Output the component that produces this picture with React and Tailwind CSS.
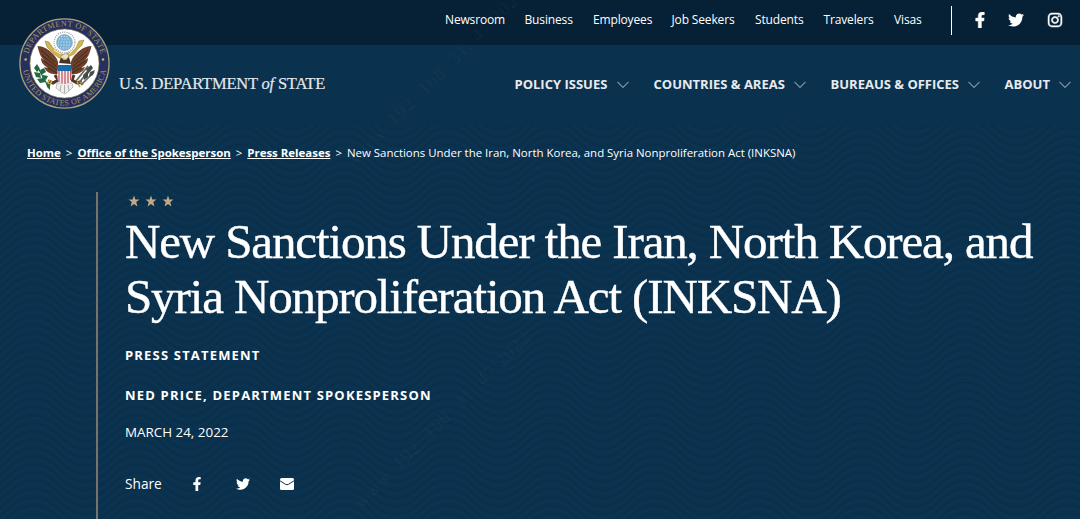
import { FaFacebookF, FaTwitter, FaInstagram } from "react-icons/fa";

const TOP_LINKS = [
    { label: "Newsroom", width: "w-[59.5px]" },
    { label: "Business", width: "w-[48.5px]" },
    { label: "Employees", width: "w-[58.5px]" },
    { label: "Job Seekers", width: "w-[63.5px]" },
    { label: "Students", width: "w-[48.5px]" },
    { label: "Travelers", width: "w-[50.5px]" },
    { label: "Visas", width: "w-[28.5px]" },
];

const MAIN_LINKS = [
    { label: "POLICY ISSUES", width: "w-[93px]" },
    { label: "COUNTRIES & AREAS", width: "w-[131px]" },
    { label: "BUREAUS & OFFICES", width: "w-[128px]" },
    { label: "ABOUT", width: "w-[45px]" },
];

const WAVE_ROWS = [-3, -2, -1, 0, 1, 2, 3, 4, 5, 6];
const WAVE_PATH = "M-25.875 12 Q0 -14 25.875 12 T77.625 12 T129.375 12";

function WaveBackground() {
    return (
        <svg className="absolute inset-0 h-full w-full" aria-hidden="true">
            <defs>
                <pattern id="waves" width="103.5" height="41" patternUnits="userSpaceOnUse" x="33.5" y="4">
                    {WAVE_ROWS.map(row => (
                        <g key={row} transform={`translate(0 ${row * 8.2})`} fill="none">
                            <path d={WAVE_PATH} stroke="#072c47" strokeWidth="1.5" opacity="0.5" />
                            <path d={WAVE_PATH} transform="translate(0 3.5)" stroke="#11395a" strokeWidth="1.5" opacity="0.3" />
                        </g>
                    ))}
                </pattern>
            </defs>
            <rect width="100%" height="100%" fill="url(#waves)" />
        </svg>
    );
}

function Seal() {
    return (
        <svg className="h-[91px] w-[91px] shrink-0" viewBox="0 0 91 91" aria-label="Department of State seal">
            <defs>
                <path id="sealTop" d="M8.2 45.5 A37.3 37.3 0 0 1 82.8 45.5" />
                <path id="sealBottom" d="M3.6 45.5 A41.9 41.9 0 0 0 87.4 45.5" />
            </defs>
            <circle cx="45.5" cy="45.5" r="44.6" fill="#272f5f" stroke="#a8a27b" strokeWidth="1.2" />
            <circle cx="45.5" cy="45.5" r="34.6" fill="#fff" stroke="#77724f" strokeWidth="0.7" />
            <g fill="#a49a5c" fontFamily="Liberation Serif, serif" fontSize="8">
                <text>
                    <textPath href="#sealTop" startOffset="50%" textAnchor="middle" textLength="98">DEPARTMENT OF STATE</textPath>
                </text>
                <text>
                    <textPath href="#sealBottom" startOffset="50%" textAnchor="middle" textLength="118">UNITED STATES OF AMERICA</textPath>
                </text>
            </g>
            <circle cx="6.7" cy="41.5" r="1.3" fill="#c9b45c" />
            <circle cx="84" cy="41.5" r="1.3" fill="#c9b45c" />

            {/* glory and stars */}
            <circle cx="45.5" cy="24.5" r="10.4" fill="#fff" stroke="#a8aaad" strokeWidth="1.3" strokeDasharray="1.2 1" />
            <circle cx="45.5" cy="24.5" r="8" fill="#79b3d8" stroke="#8ea5b2" strokeWidth="0.6" />
            <g stroke="#cfe8f5" strokeWidth="1.1" strokeDasharray="1.1 1.6">
                <path d="M40 21 H51 M39 24 H52 M39 27 H52 M41 30 H50 M42 18.5 H49" />
            </g>

            {/* scroll */}
            <path d="M26 23 L30 24 L34 30 L39 34 L45 37 L52 34 L57 30 L60 23 L65 22 L63 27 L59 31 L55 36 L49 39 L40 40 L34 35 L28 29 Z" fill="#d4b54d" stroke="#8d7430" strokeWidth="0.5" />
            <path d="M35 32 L42 36 M55 31 L50 36" stroke="#fff3bd" strokeWidth="1" />

            {/* wings */}
            <path d="M18.500 28 C24 28 29 31 33 35 C36 38 38 40 39 44 L39 56 C32 57 27 54 25 49 L29 50 C24 47 22 44 22 40 L25 42 C21 38 20 34 18.500 28 Z" fill="#6c402b" />
            <path d="M72.500 28 C67 28 62 31 58 35 C55 38 53 40 52 44 L52 56 C59 57 64 54 66 49 L62 50 C67 47 69 44 69 40 L66 42 C70 38 71 34 72.500 28 Z" fill="#6c402b" />
            <g fill="none" stroke="#352519" strokeWidth="0.8">
                <path d="M22 32 L36 44 M23 37 L37 48 M25 43 L38 52 M29 50 L38 55" />
                <path d="M69 32 L55 44 M68 37 L54 48 M66 43 L53 52 M62 50 L53 55" />
            </g>
            <path d="M40 45 L42 39 L45 42 L50 39 L52 46 Z" fill="#4d3525" />
            <path d="M42 38 L47 35 L50 38 L47 42 L44 40 L41 40 Z" fill="#e9e1cd" stroke="#8d7430" strokeWidth="0.5" />

            {/* tail and legs */}
            <path d="M38 65 L53 65 L54 69 L50 73 L46 76 L42 74 L37 70 Z" fill="#eeeeed" stroke="#9b9b9b" strokeWidth="0.6" />
            <path d="M42 67 L41 73 M45.500 67 V75 M49 67 L50 73" stroke="#909090" strokeWidth="0.7" />
            <path d="M36 57 L39 62 L34 65 L29 63 M55 57 L53 62 L58 65 L63 64" fill="none" stroke="#4d3525" strokeWidth="3" />
            <path d="M31 62 L28 66 M33 63 L30 68 M60 62 L64 67 M58 64 L61 69" stroke="#d0a53a" strokeWidth="1.600" />

            {/* shield */}
            <path d="M38.500 51 H52.500 V61 Q52 65 45.500 66 Q39 65 38.500 61 Z" fill="#f7eeee" />
            <path d="M40 52 V64 M43 52 V65.500 M46 52 V66 M49 52 V65 M51.700 52 V62" stroke="#bd3b4c" strokeWidth="1.100" />
            <rect x="38.500" y="47" width="14" height="6" fill="#176aa5" />

            {/* olive branch and arrows */}
            <path d="M18 48 L29 68" stroke="#1c6038" strokeWidth="1.200" />
            <g fill="#236a40">
                <path d="M18 46 L21 51 L18 54 L15 50 Z M15 54 L21 55 L22 60 L17 59 Z M21 52 L25 50 L27 54 L22 57 Z M18 61 L24 60 L27 64 L21 65 Z M24 57 L29 58 L27 62 L23 60 Z M27 65 L31 66 L31 72 L28 69 Z" />
            </g>
            <path d="M59 66 L72 50 M62 67 L75 54 M57 63 L69 48" stroke="#656660" strokeWidth="1.700" />
            <path d="M67 51 L72 47 L74 50 L69 56 Z M71 54 L76 52 L74 57 L70 59 Z M64 57 L69 52 L69 59 L65 62 Z" fill="#464a48" />
        </svg>
    );
}

function Chevron() {
    return (
        <svg className="ml-[9px] h-2 w-3 shrink-0" viewBox="0 0 12 8" fill="none" aria-hidden="true">
            <path d="M0.500 0.800 L6 6.500 L11.500 0.800" stroke="#8495a7" strokeWidth="1.100" />
        </svg>
    );
}

function Star() {
    return (
        <svg className="h-3 w-3" viewBox="0 0 24 24" fill="#c4a884" aria-hidden="true">
            <path d="M12 1 L14.800 9 H23 L16.500 14.200 L18.800 23 L12 17.800 L5.200 23 L7.500 14.200 L1 9 H9.200 Z" />
        </svg>
    );
}

function MailIcon() {
    return (
        <svg className="ml-[30px] h-3 w-[14px]" viewBox="0 0 14 12" fill="none" aria-hidden="true">
            <rect width="14" height="12" rx="1.500" fill="#fff" />
            <path d="M0 2.800 L5.500 6.300 Q7 7.200 8.500 6.300 L14 2.800" stroke="#0b304c" strokeWidth="1" />
        </svg>
    );
}

function Watermark() {
    return (
        <div className="pointer-events-none absolute inset-0 overflow-hidden font-['Liberation_Serif',serif] text-[19px] leading-6 tracking-[1px] whitespace-nowrap text-white/[0.04]" aria-hidden="true">
            <span className="absolute top-[149px] left-[352px] origin-left -rotate-45">www. 192. 168. 31. 47 2022</span>
            <span className="absolute top-[493px] left-[357px] origin-left -rotate-45">www. 192. 168. 31. 47 2022</span>
        </div>
    );
}

export default function App() {
    return (
        <div className="relative flex h-[519px] w-[1080px] flex-col overflow-hidden bg-[#0a314d] font-['Open_Sans',sans-serif] text-white">
            <header className="relative h-[125px] shrink-0">
                <div className="flex h-[45px] items-center bg-[#062136] pb-[5px] pl-[445px] text-xs">
                    <nav className="flex gap-5 tracking-[-0.15px] whitespace-nowrap">
                        {TOP_LINKS.map(item => (
                            <a key={item.label} className={item.width}>{item.label}</a>
                        ))}
                    </nav>
                    <div className="ml-[28.5px] h-[29px] w-px bg-white" />
                    <FaFacebookF className="ml-[20px] h-4 w-4" stroke="currentColor" strokeWidth="16" />
                    <FaTwitter className="ml-[20px] h-4 w-4" />
                    <FaInstagram className="ml-[23px] h-4 w-4" stroke="currentColor" strokeWidth="16" />
                </div>
                <nav className="flex h-20 items-center pl-[514.5px] text-[13px] font-bold whitespace-nowrap text-[#e7ebee]">
                    {MAIN_LINKS.map(item => (
                        <a key={item.label} className="mr-[25px] flex shrink-0 items-center">
                            <span className={item.width}>{item.label}</span>
                            <Chevron />
                        </a>
                    ))}
                </nav>
                <div className="absolute top-[17.5px] left-[19px] flex">
                    <Seal />
                    <div className="mt-[54px] ml-[9px] font-['Liberation_Serif',serif] text-[16.5px] leading-6 tracking-[-0.2px] whitespace-nowrap text-[#e2e8ec] [-webkit-text-stroke:0.2px]">
                        U.S. DEPARTMENT <i>of</i> STATE
                    </div>
                </div>
            </header>

            <main className="relative flex-1">
                <WaveBackground />
                <div className="relative flex h-full flex-col">
                    <div className="mt-5 ml-[27px] flex gap-[5px] text-[11.45px] leading-4 whitespace-nowrap">
                        <a className="font-bold underline">Home</a>
                        <span>&gt;</span>
                        <a className="font-bold underline">Office of the Spokesperson</a>
                        <span>&gt;</span>
                        <a className="font-bold underline">Press Releases</a>
                        <span>&gt;</span>
                        <span>New Sanctions Under the Iran, North Korea, and Syria Nonproliferation Act (INKSNA)</span>
                    </div>

                    <div className="mt-[31px] ml-24 flex-1 border-l-2 border-[#77736b] pl-[27px]">
                        <div className="flex gap-[5px] pt-[3px] pl-[2.5px]">
                            <Star />
                            <Star />
                            <Star />
                        </div>
                        <h1 className="mt-[7px] font-['Liberation_Serif',serif] text-[49px] leading-[55px] tracking-[-1.13px] whitespace-nowrap [-webkit-text-stroke:0.4px]">
                            <span className="block">New Sanctions Under the Iran, North Korea, and</span>
                            <span className="block">Syria Nonproliferation Act (INKSNA)</span>
                        </h1>
                        <p className="mt-[21px] text-[13px] leading-5 font-bold tracking-[1.18px]">PRESS STATEMENT</p>
                        <p className="mt-5 text-[13px] leading-5 font-bold tracking-[1.18px]">NED PRICE, DEPARTMENT SPOKESPERSON</p>
                        <p className="mt-[17px] text-[13.4px] leading-5">MARCH 24, 2022</p>
                        <div className="mt-8 flex items-center text-[13.7px] leading-5">
                            <span className="w-9">Share</span>
                            <FaFacebookF className="ml-[29px] h-[14px] w-[14px]" />
                            <FaTwitter className="ml-[32px] h-[14px] w-[14px]" />
                            <MailIcon />
                        </div>
                    </div>
                </div>
            </main>
            <Watermark />
        </div>
    );
}
